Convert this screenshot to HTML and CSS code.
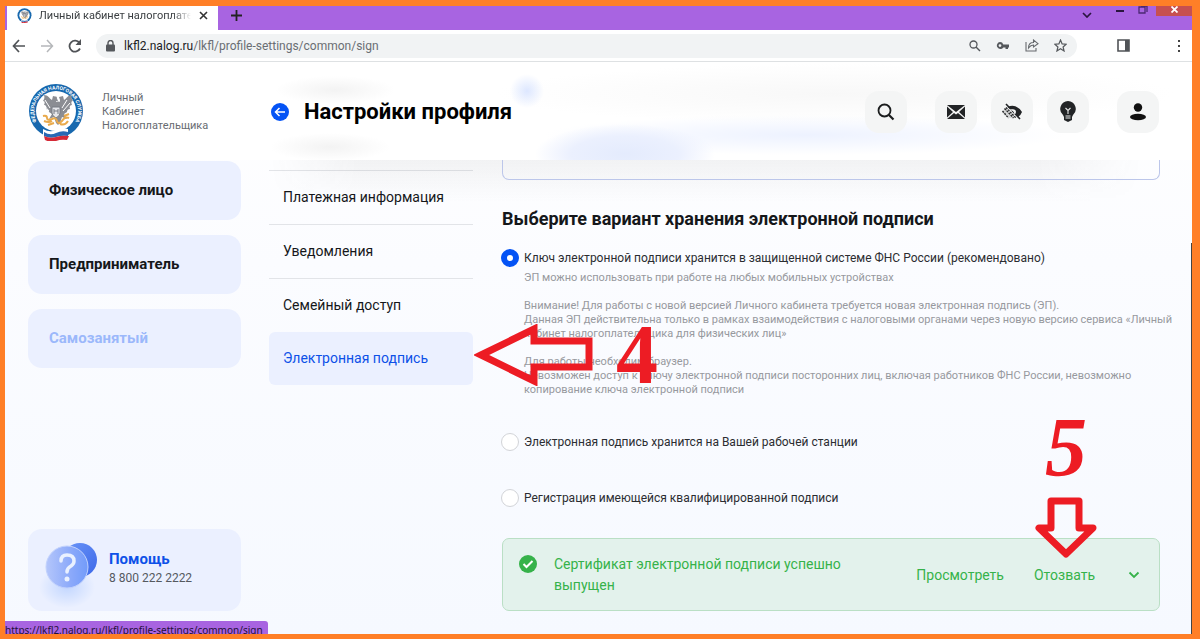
FILE: index.html
```
<!DOCTYPE html>
<html lang="ru">
<head>
    <meta charset="UTF-8">
    <meta name="viewport" content="width=device-width, initial-scale=1.0">
    <title>Личный кабинет налогоплательщика</title>
    <link rel="stylesheet" href="styles.css">
</head>
<body>
    <svg class="defs" width="0" height="0">
        <symbol id="emblem" viewBox="0 0 56 58">
            <circle cx="28" cy="28" r="27" fill="#1768ae"/>
            <circle cx="28" cy="28" r="20" fill="#fff"/>
            <path fill="#8b8d93" d="M26 18l2-5 2 5c1 2 2 1 2-1l-1-3 4-1 1 4c3-2 4-5 8-5-1 3 0 4 1 6-2 0-2 2-1 4-2 0-3 2-2 4-2 0-3 1-3 3l-3 2 3 5-5-2-2 6-2 2-2-2-2-6-5 2 3-5-3-2c0-2-1-3-3-3 1-2 0-4-2-4 1-2 1-4-1-4 1-2 2-3 1-6 4 0 5 3 8 5l1-4 4 1-1 3c0 2 1 3 2 1z"/>
            <path d="M17 17l5 8M14 20l7 8M39 17l-5 8M42 20l-7 8" stroke="#fff" stroke-width="1"/>
            <path d="M24 24h8v6q0 3-4 5-4-2-4-5z" fill="#e5e6ea" stroke="#777b83" stroke-width="1"/>
            <path d="M26 26v5m4-5v5m-4-3h4" stroke="#777b83"/>
            <path d="M15 33q4-1 4 2t5 1q4-2 5 2t5 0q3-5 7-3M16 38q5 2 8 0m8 3q5 2 8-3M20 42l6-2M36 33l5-2" fill="none" stroke="#e9aa4c" stroke-width="2"/>
            <path d="M15 46q7 4 13 1t12-1v10q-6-2-12 1t-13-1z" fill="#fff"/>
            <path d="M16 49q6 4 12 1t12-1v4q-6-1-12 1t-12-1z" fill="#2869b4"/>
            <path d="M16 53q6 3 12 1t13-1l-2 4q-6-1-11 1t-11-1z" fill="#d52936"/>
        </symbol>
    </svg>

    <div class="window">
        <div class="tabs">
            <div class="tab">
                <svg class="tab-icon"><use href="#emblem"/></svg>
                <span class="tab-title">Личный кабинет налогоплательщика</span>
                <button class="plain" aria-label="Закрыть вкладку">
                    <svg width="9" height="9" viewBox="0 0 9 9"><path d="M1 1l7 7M8 1L1 8" stroke="#333" stroke-width="1.6"/></svg>
                </button>
            </div>
            <button class="plain new-tab" aria-label="Новая вкладка">
                <svg width="11" height="11" viewBox="0 0 11 11"><path d="M5.500 0v11M0 5.500h11" stroke="#222" stroke-width="1.8"/></svg>
            </button>
            <div class="win-buttons">
                <button class="plain win-list" aria-label="Поиск вкладок">
                    <svg width="10" height="6" viewBox="0 0 10 6"><path d="M1 1l4 4 4-4" fill="none" stroke="#2a1540" stroke-width="1.7"/></svg>
                </button>
                <button class="plain" aria-label="Свернуть">
                    <svg width="8" height="10" viewBox="0 0 8 10"><path d="M0 5h8" stroke="#2a1540" stroke-width="2"/></svg>
                </button>
                <button class="plain" aria-label="Восстановить">
                    <svg width="10" height="10" viewBox="0 0 10 10"><path d="M1 1h6v6H1zM3 0h6v6" fill="none" stroke="#4b2873" stroke-width="1.3"/></svg>
                </button>
                <button class="plain win-close" aria-label="Закрыть">
                    <svg width="7" height="7" viewBox="0 0 7 7"><path d="M.5.5l6 6M6.500.5l-6 6" stroke="#fff" stroke-width="1.8"/></svg>
                </button>
            </div>
        </div>

        <div class="toolbar">
            <button class="plain" aria-label="Назад">
                <svg width="14" height="14" viewBox="0 0 14 14"><path d="M13 7H2M7 1L1.500 7 7 13" fill="none" stroke="#505357" stroke-width="1.7"/></svg>
            </button>
            <button class="plain" aria-label="Вперёд">
                <svg width="14" height="14" viewBox="0 0 14 14"><path d="M1 7h11M7 1l5.500 6L7 13" fill="none" stroke="#b5b7ba" stroke-width="1.500"/></svg>
            </button>
            <button class="plain" aria-label="Обновить">
                <svg width="14" height="14" viewBox="0 0 14 14"><path d="M12 9.500A5.500 5.500 0 1 1 11.500 4" fill="none" stroke="#505357" stroke-width="1.800"/><path d="M13 0v6H7.500z" fill="#505357"/></svg>
            </button>
            <div class="omnibox">
                <svg width="9" height="12" viewBox="0 0 9 12"><path d="M2 5V3a2.500 2.500 0 0 1 5 0v2" fill="none" stroke="#55585c" stroke-width="1.400"/><rect x="0" y="4.500" width="9" height="7" rx="1" fill="#55585c"/></svg>
                <span class="url" role="textbox" contenteditable="true" spellcheck="false" aria-label="Адрес"><b>lkfl2.nalog.ru</b>/lkfl/profile-settings/common/sign</span>
                <button class="plain" aria-label="Масштаб">
                    <svg width="12" height="12" viewBox="0 0 12 12"><circle cx="4.500" cy="4.500" r="3.500" fill="none" stroke="#55585c" stroke-width="1.300"/><path d="M7 7l4 4" stroke="#55585c" stroke-width="1.400"/></svg>
                </button>
                <button class="plain" aria-label="Пароли">
                    <svg width="14" height="12" viewBox="0 0 14 12"><path fill-rule="evenodd" fill="#55585c" d="M4 2a3.500 3.500 0 0 1 3.300 2.400H13v3h-1V9H9.500V7.400H7.300A3.500 3.500 0 1 1 4 2zm0 2.200a1.400 1.400 0 1 0 0 2.800 1.400 1.400 0 0 0 0-2.800z"/></svg>
                </button>
                <button class="plain" aria-label="Поделиться">
                    <svg width="14" height="13" viewBox="0 0 14 13"><path d="M1 3v9h10V9M3.500 9c0-4 2-5.500 5-5.500V1L13 4.700 8.500 8V6C6 6 5 7 3.500 9z" fill="none" stroke="#66696d" stroke-width="1.100"/></svg>
                </button>
                <button class="plain" aria-label="Закладка">
                    <svg width="13" height="13" viewBox="0 0 24 24"><path d="M12 2l3 7 7.500.6-5.700 5 1.700 7.400L12 18l-6.500 4 1.700-7.400-5.700-5L9 9z" fill="none" stroke="#55585c" stroke-width="2.300"/></svg>
                </button>
            </div>
            <button class="plain panel-btn" aria-label="Боковая панель">
                <svg width="13" height="13" viewBox="0 0 13 13"><path d="M1 1h11v11H1z" fill="#fff" stroke="#505357" stroke-width="1.600"/><path d="M8 1h4v11H8z" fill="#505357"/></svg>
            </button>
            <button class="plain" aria-label="Меню">
                <svg width="4" height="12" viewBox="0 0 4 12"><path d="M1 0h2v2H1zM1 5h2v2H1zM1 10h2v2H1z" fill="#444"/></svg>
            </button>
        </div>

        <div class="page">
            <header class="header">
                <a class="brand" href="#">
                    <svg width="56" height="58" viewBox="0 0 56 58">
                        <use href="#emblem"/>
                        <path id="ring" d="M13 44.500A22 22 0 1 1 43 44.500" fill="none"/>
                        <text class="ring-text"><textPath href="#ring" startOffset="50%">ФЕДЕРАЛЬНАЯ НАЛОГОВАЯ СЛУЖБА</textPath></text>
                    </svg>
                    <span>Личный<br>Кабинет<br>Налогоплательщика</span>
                </a>
                <div class="title">
                    <a class="back" href="#" aria-label="Назад">
                        <svg width="18" height="18" viewBox="0 0 18 18"><circle cx="9" cy="9" r="9" fill="#0453f5"/><path d="M14 9H5M8.500 5L4.500 9l4 4" fill="none" stroke="#fff" stroke-width="1.500"/></svg>
                    </a>
                    <h1>Настройки профиля</h1>
                </div>
                <div class="actions">
                    <button class="action search" aria-label="Поиск">
                        <svg width="18" height="18" viewBox="0 0 18 18"><circle cx="7.500" cy="7.500" r="6" fill="none" stroke="#1b1d1e" stroke-width="1.800"/><path d="M12 12l4.500 4.500" stroke="#1b1d1e" stroke-width="2.200"/></svg>
                    </button>
                    <button class="action" aria-label="Сообщения">
                        <svg width="18" height="14" viewBox="0 0 18 14"><path fill="#222426" d="M0 0h18L9 7zM0 1.500L6 7l-6 5.500zM18 1.500L12 7l6 5.500zM0 14l7-6 2 1.500L11 8l7 6z"/></svg>
                    </button>
                    <button class="action" aria-label="Версия для слабовидящих">
                        <svg width="20" height="18" viewBox="0 0 20 18"><path d="M5.500 4Q14 0 20 9q-1 3-4 5l-2.500-2.500q2-6-4.500-5z" fill="#222426"/><path d="M4 1l14 15" stroke="#222426" stroke-width="1.600"/><path d="M3.500 4.500L0 9q4 7 12 6l1-1z" fill="#d4d5d5"/><path d="M2.500 5.500l9 9.500M.5 8l6 7M4 4.500l10 10.500" stroke="#222426" stroke-width="1.300" stroke-dasharray="2 1"/><path d="M8 7q4-1 5 4" fill="none" stroke="#f4f5f5" stroke-width="1.200"/></svg>
                    </button>
                    <button class="action" aria-label="Подсказки">
                        <svg width="16" height="22" viewBox="0 0 16 22"><path d="M8 0a8 8 0 0 1 5 14l-1 2v3l-2 1-2 1-2-1-2-1v-3l-1-2A8 8 0 0 1 8 0z" fill="#222426"/><path d="M5.500 7L8 9.500 10.500 7M8 9v4M5.500 15h5M5.500 17h5" fill="none" stroke="#e8e9e9" stroke-width="1.100"/></svg>
                    </button>
                    <button class="action profile" aria-label="Профиль">
                        <svg width="16" height="18" viewBox="0 0 16 18"><circle cx="8" cy="4.500" r="4.200" fill="#111"/><ellipse cx="8" cy="14" rx="8" ry="3.200" fill="#111"/></svg>
                    </button>
                </div>
            </header>

            <div class="columns">
                <aside class="sidebar">
                    <a class="card" href="#">Физическое лицо</a>
                    <a class="card" href="#">Предприниматель</a>
                    <a class="card disabled" href="#">Самозанятый</a>
                    <a class="help" href="#">
                        <svg width="64" height="80" viewBox="0 -11 64 80">
                            <defs>
                                <linearGradient id="g1" x1="0" y1="0" x2="1" y2="1"><stop offset="0" stop-color="#6b96f8"/><stop offset="1" stop-color="#3c67e8"/></linearGradient>
                                <linearGradient id="g2" x1="0" y1="0" x2="1" y2="0"><stop offset="0" stop-color="#b4c6fb"/><stop offset=".6" stop-color="#8ba9fa"/><stop offset="1" stop-color="#729bfa"/></linearGradient>
                                <radialGradient id="g3"><stop offset="0" stop-color="#c3d7ff"/><stop offset="1" stop-color="#c3d7ff" stop-opacity="0"/></radialGradient>
                            </defs>
                            <ellipse cx="28" cy="46" rx="28" ry="21" fill="url(#g3)"/>
                            <circle cx="41" cy="19" r="17" fill="url(#g1)"/>
                            <circle cx="28" cy="26" r="21" fill="url(#g2)" stroke="#c2d2fd"/>
                            <path d="M22 20q0-6 6-6 7 0 7 6 0 3-3 5-4 2-4 6" fill="none" stroke="#eaf1ff" stroke-width="3.500" stroke-linecap="round"/>
                            <circle cx="28" cy="38" r="2.500" fill="#eaf1ff"/>
                        </svg>
                        <span class="help-text"><strong>Помощь</strong><span>8 800 222 2222</span></span>
                    </a>
                </aside>

                <nav class="menu">
                    <a href="#">Платежная информация</a>
                    <a href="#">Уведомления</a>
                    <a href="#">Семейный доступ</a>
                    <a class="active" href="#">Электронная подпись</a>
                </nav>

                <main class="content">
                    <div class="box-end"></div>
                    <h2>Выберите вариант хранения электронной подписи</h2>
                    <form class="options">
                        <div class="option">
                            <input type="radio" name="store" id="store1" checked>
                            <div>
                                <label for="store1">Ключ электронной подписи хранится в защищенной системе ФНС России (рекомендовано)</label>
                                <p class="first">ЭП можно использовать при работе на любых мобильных устройствах</p>
                                <p>Внимание! Для работы с новой версией Личного кабинета требуется новая электронная подпись (ЭП).<br>Данная ЭП действительна только в рамках взаимодействия с налоговыми органами через новую версию сервиса «Личный<br>кабинет налогоплательщика для физических лиц»</p>
                                <p>Для работы необходим браузер.<br>Невозможен доступ к ключу электронной подписи посторонних лиц, включая работников ФНС России, невозможно<br>копирование ключа электронной подписи</p>
                            </div>
                        </div>
                        <div class="option">
                            <input type="radio" name="store" id="store2">
                            <label for="store2">Электронная подпись хранится на Вашей рабочей станции</label>
                        </div>
                        <div class="option">
                            <input type="radio" name="store" id="store3">
                            <label for="store3">Регистрация имеющейся квалифицированной подписи</label>
                        </div>
                    </form>
                    <div class="cert">
                        <svg class="cert-icon" width="18" height="18" viewBox="0 0 18 18"><circle cx="9" cy="9" r="9" fill="#36b24a"/><path d="M4.500 9l3 3 6-6" fill="none" stroke="#fff" stroke-width="2"/></svg>
                        <div class="cert-text">Сертификат электронной подписи успешно выпущен</div>
                        <button class="plain cert-btn">Просмотреть</button>
                        <button class="plain cert-btn">Отозвать</button>
                        <button class="plain cert-more" aria-label="Подробнее">
                            <svg width="12" height="8" viewBox="0 0 12 8"><path d="M1.500 1.500L6 6l4.500-4.500" fill="none" stroke="#36b24a" stroke-width="1.800"/></svg>
                        </button>

                        <!-- step 5 -->
                        <div class="step step-down">
                            <span>5</span>
                            <svg width="66" height="62" viewBox="0 0 66 62"><path d="M18 4h28v27h14L33 57 6 31h12z" fill="none" stroke="#ed1c24" stroke-width="7" stroke-linejoin="round"/></svg>
                        </div>
                    </div>

                    <!-- step 4 -->
                    <div class="step step-left">
                        <svg width="120" height="62" viewBox="0 0 120 62"><path d="M7 31L60 5v12h55v26H60v14z" fill="none" stroke="#ed1c24" stroke-width="7"/></svg>
                        <span>4</span>
                    </div>
                </main>
            </div>
            <div class="scrollbar"></div>
            <div class="status">https://lkfl2.nalog.ru/lkfl/profile-settings/common/sign</div>
        </div>
    </div>
</body>
</html>
```

FILE: styles.css
```
*{
    margin: 0;
    padding: 0;
    box-sizing: border-box;
}
html,body{
    height: 100%;
}
body{
    font-family: Roboto, "Liberation Sans", sans-serif;
    font-size: 14px;
    color: #15171a;
    overflow: hidden;
}
a{
    color: inherit;
    text-decoration: none;
}
svg{
    display: block;
    flex-shrink: 0;
}
.defs{
    position: absolute;
}
.plain{
    border: none;
    background: transparent;
    font: inherit;
    color: inherit;
    cursor: pointer;
    flex-shrink: 0;
}
.window{
    height: 100%;
    display: flex;
    flex-direction: column;
    border: 5px solid #ff7f27;
    border-top-width: 6px;
    border-right-width: 8px;
}

/* browser */
.tabs{
    display: flex;
    align-items: center;
    height: 24px;
    padding-left: 2px;
    background: #a864e1;
    flex-shrink: 0;
}
.tab{
    display: flex;
    align-items: center;
    width: 211px;
    height: 24px;
    padding: 0 10px 6px;
    background: #fff;
}
.tab-icon{
    width: 15px;
    height: 15px;
}
.tab-title{
    flex: 1;
    margin: 0 8px 0 7px;
    font-size: 11px;
    color: #3c4043;
    white-space: nowrap;
    overflow: hidden;
    -webkit-mask-image: linear-gradient(90deg, #000 88%, transparent);
    mask-image: linear-gradient(90deg, #000 88%, transparent);
}
.new-tab{
    margin-left: 13px;
    margin-bottom: 6px;
}
.win-buttons{
    display: flex;
    align-self: flex-start;
    align-items: flex-start;
    gap: 14px;
    margin-left: auto;
}
.win-list{
    padding: 6px 10px 0 0;
}
.win-close{
    display: flex;
    justify-content: center;
    width: 36px;
    height: 10px;
    margin-left: -6px;
    background: #c75050;
}
.toolbar{
    display: flex;
    align-items: center;
    height: 32px;
    padding: 0 11px 0 7px;
    gap: 14px;
    background: #fff;
    border-bottom: 1px solid #dee1e3;
    flex-shrink: 0;
}
.omnibox{
    flex: 1;
    display: flex;
    align-items: center;
    gap: 15px;
    height: 24px;
    padding: 0 10px;
    border-radius: 12px;
    background: #f1f3f4;
}
.url{
    flex: 1;
    margin-left: -6px;
    font-size: 12px;
    color: #6a6e73;
    outline: none;
}
.url b{
    font-weight: 400;
    color: #202124;
}
.panel-btn{
    margin: 0 33px 0 26px;
}

/* page */
.page{
    flex: 1;
    min-height: 0;
    position: relative;
    display: flex;
    flex-direction: column;
    overflow: hidden;
    background: linear-gradient(#fff, #fbfcff 35%, #f6f9ff);
}
.header{
    position: relative;
    display: flex;
    align-items: center;
    height: 98px;
    padding: 2px 33px 0 23px;
    flex-shrink: 0;
    background:
        radial-gradient(ellipse 60px 14px at 330px 28px, #f3f3f3, transparent),
        radial-gradient(ellipse 60px 14px at 325px 85px, #f3f3f3, transparent),
        radial-gradient(circle 17px at 522px 29px, #dde7ff, transparent),
        radial-gradient(ellipse 90px 30px at 620px 92px, #e4ebfd, #ebf0fe 60%, transparent),
        radial-gradient(ellipse 260px 20px at 800px 73px, #edf2ff, transparent),
        radial-gradient(ellipse 340px 30px at 830px 32px, #f8f8f8, transparent),
        #fff;
}
.header::after{
    content: '';
    position: absolute;
    top: 98px;
    left: 265px;
    right: 50px;
    height: 42px;
    background: linear-gradient(rgba(60, 60, 60, .06), transparent);
    -webkit-mask-image: linear-gradient(90deg, transparent, #000 10%, #000 88%, transparent);
    mask-image: linear-gradient(90deg, transparent, #000 10%, #000 88%, transparent);
}
.brand{
    display: flex;
    align-items: center;
    gap: 18px;
    width: 243px;
    font-size: 11px;
    line-height: 14px;
    color: #686c72;
}
.ring-text{
    font: bold 5px Roboto, sans-serif;
    fill: #fff;
    text-anchor: middle;
}
.title{
    display: flex;
    align-items: center;
    gap: 15px;
}
.title h1{
    font-size: 22px;
    line-height: 28px;
    color: #000;
}
.actions{
    display: flex;
    gap: 14px;
    margin-left: auto;
}
.action{
    display: flex;
    align-items: center;
    justify-content: center;
    width: 42px;
    height: 42px;
    border: none;
    border-radius: 14px;
    background: #f4f5f5;
    cursor: pointer;
}
.search{
    margin-right: 14px;
}
.profile{
    margin-left: 14px;
}
.columns{
    flex: 1;
    min-height: 0;
    display: flex;
    padding: 0 32px 23px 23px;
}

/* left column */
.sidebar{
    display: flex;
    flex-direction: column;
    gap: 15px;
    width: 213px;
    padding-top: 1px;
    margin-right: 28px;
    flex-shrink: 0;
}
.card{
    padding: 20px 21px;
    border-radius: 14px;
    background: #ebf0ff;
    font-size: 15px;
    font-weight: 700;
    line-height: 19px;
}
.card.disabled{
    color: #9bb8fb;
}
.help{
    display: flex;
    align-items: center;
    gap: 6px;
    height: 82px;
    padding-left: 11px;
    margin-top: auto;
    border-radius: 14px;
    background: #ebf0ff;
}
.help-text{
    display: flex;
    flex-direction: column;
    font-size: 12px;
    line-height: 18px;
    color: #55595f;
    padding-bottom: 4px;
}
.help-text strong{
    font-size: 15px;
    line-height: 20px;
    color: #0d51e8;
}

/* settings menu */
.menu{
    width: 204px;
    padding-top: 10px;
    margin-right: 29px;
    flex-shrink: 0;
}
.menu a{
    display: block;
    padding: 16px 14px;
    border-top: 1px solid #e2e4e8;
    line-height: 21px;
}
.menu .active{
    border: none;
    border-radius: 6px;
    background: #ebf0ff;
    color: #0d51e8;
}

/* content */
.content{
    position: relative;
    flex: 1;
    min-width: 0;
    display: flex;
    flex-direction: column;
}
.box-end{
    height: 20px;
    border: 1px solid #bcc6ea;
    border-top: none;
    border-radius: 0 0 7px 7px;
    flex-shrink: 0;
}
.content h2{
    margin-top: 27px;
    font-size: 18px;
    line-height: 24px;
    white-space: nowrap;
}
.options{
    display: flex;
    flex-direction: column;
    gap: 36px;
    padding-top: 18px;
}
.option{
    display: flex;
    align-items: flex-start;
    gap: 5px;
    min-height: 20px;
    margin-left: -1px;
}
.option input{
    appearance: none;
    width: 18px;
    height: 18px;
    border: 1px solid #d2d4d8;
    border-radius: 50%;
    background: #fff;
    flex-shrink: 0;
}
.option input:checked{
    border: 6px solid #0453f5;
}
.option label{
    display: block;
    font-size: 12px;
    line-height: 18px;
    color: #2b2d31;
    white-space: nowrap;
}
.option p{
    margin-top: 14px;
    font-size: 11px;
    line-height: 14px;
    color: #97999e;
    white-space: nowrap;
}
.option .first{
    margin-top: 4px;
}
.cert{
    position: relative;
    display: flex;
    align-items: center;
    height: 73px;
    padding: 0 19px 0 16px;
    margin-top: auto;
    border: 1px solid #badfc5;
    border-radius: 7px;
    background: #e3f2ec;
    color: #36b24a;
    flex-shrink: 0;
}
.cert-icon{
    align-self: flex-start;
    margin-top: 16px;
}
.cert-text{
    width: 300px;
    margin-left: 17px;
    line-height: 21px;
}
.cert-btn{
    margin-left: 30px;
}
.cert-text + .cert-btn{
    margin-left: auto;
}
.cert-more{
    margin-left: 33px;
}

/* step marks */
.step{
    position: absolute;
    display: flex;
    align-items: center;
    color: #ed1c24;
    font: bold 84px/62px "Liberation Serif", serif;
    pointer-events: none;
}
.step-left{
    top: 164px;
    left: -28px;
    gap: 22px;
}
.step-down{
    right: 60px;
    bottom: 51px;
    flex-direction: column;
    gap: 18px;
    font-style: italic;
}

.scrollbar{
    position: absolute;
    top: 181px;
    right: 0;
    bottom: 0;
    width: 1px;
    background: #444;
}
.status{
    position: absolute;
    left: 0;
    bottom: 0;
    height: 13px;
    padding-right: 5px;
    border-radius: 0 3px 0 0;
    background: #a864e1;
    color: #24103a;
    font: 10px/18px "Noto Sans", sans-serif;
    overflow: hidden;
}
```
